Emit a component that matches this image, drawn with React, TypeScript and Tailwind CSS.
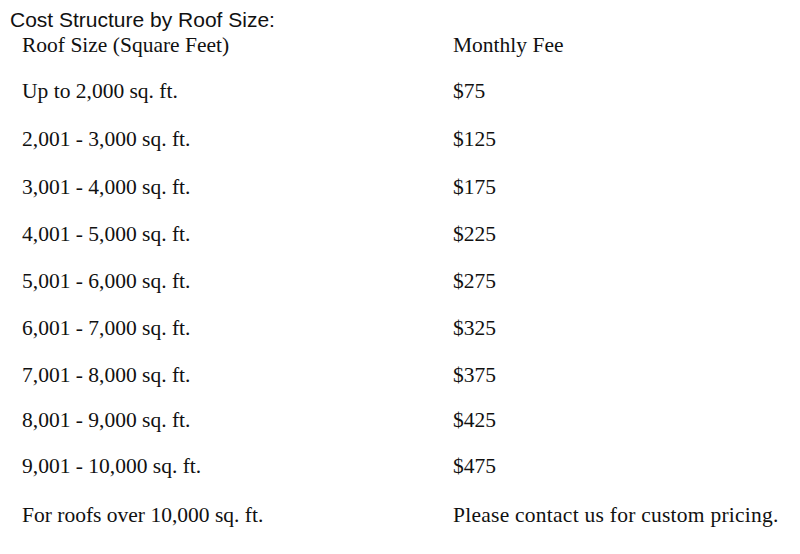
const rows: { size: string; fee: string; h: string }[] = [
  { size: "Up to 2,000 sq. ft.", fee: "$75", h: "h-[47px]" },
  { size: "2,001 - 3,000 sq. ft.", fee: "$125", h: "h-[48px]" },
  { size: "3,001 - 4,000 sq. ft.", fee: "$175", h: "h-[48px]" },
  { size: "4,001 - 5,000 sq. ft.", fee: "$225", h: "h-[47px]" },
  { size: "5,001 - 6,000 sq. ft.", fee: "$275", h: "h-[47px]" },
  { size: "6,001 - 7,000 sq. ft.", fee: "$325", h: "h-[47px]" },
  { size: "7,001 - 8,000 sq. ft.", fee: "$375", h: "h-[46px]" },
  { size: "8,001 - 9,000 sq. ft.", fee: "$425", h: "h-[45px]" },
  { size: "9,001 - 10,000 sq. ft.", fee: "$475", h: "h-[47px]" },
  { size: "For roofs over 10,000 sq. ft.", fee: "Please contact us for custom pricing.", h: "h-[50px]" },
];

export default function App() {
  return (
    <div className="h-[554px] w-[800px] overflow-hidden bg-white text-[#111]">
      <div className="h-[32px] pl-[10px] pt-[8px] font-['Liberation_Sans',Arial,sans-serif] text-[21px] leading-[24px]">
        Cost Structure by Roof Size:
      </div>

      <div className="font-['Liberation_Serif','Times_New_Roman',serif] text-[21.5px]">
        <div className="flex h-[36px] items-start leading-[26px]">
          <div className="w-[453px] pl-[22px]">Roof Size (Square Feet)</div>
          <div>Monthly Fee</div>
        </div>

        {rows.map((r, i) => (
          <div key={r.size} className={`flex items-center ${r.h}`}>
            <div className="w-[453px] pl-[22px]">{r.size}</div>
            <div className={i === rows.length - 1 ? "tracking-[0.25px]" : ""}>{r.fee}</div>
          </div>
        ))}
      </div>
    </div>
  );
}
